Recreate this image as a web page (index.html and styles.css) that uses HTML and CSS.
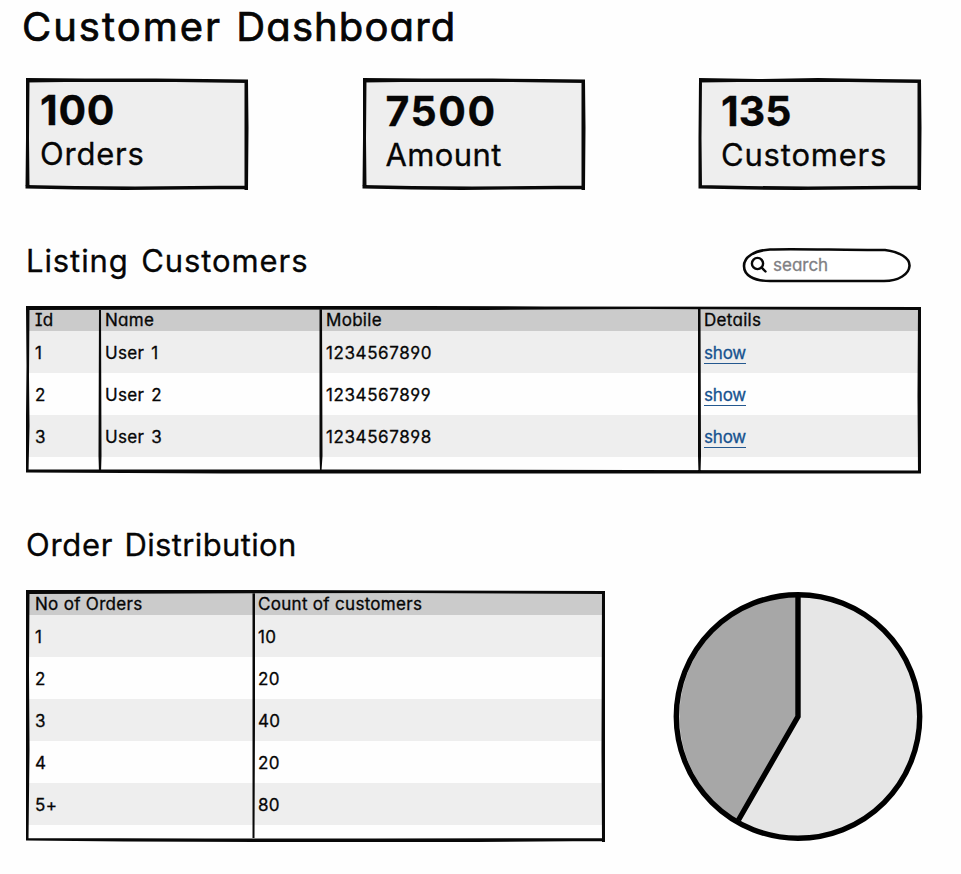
FILE: index.html
```html
<!DOCTYPE html>
<html lang="en">
<head>
<meta charset="utf-8">
<title>Customer Dashboard</title>
<link rel="stylesheet" href="styles.css">
</head>
<body>
<main class="page">
  <h1 class="title">Customer <span>Dashboard</span></h1>

  <section class="cards">
    <div class="card">
      <svg class="sketch" viewBox="0 0 224 112"><path class="fill" d="M3 3H221V109H3Z"/><path d="M1 0L60 .5 130 .5 180 1 223 1.500V5L150 4 90 4 40 4 1 4.500ZM219.500 2H223L223.500 50 223 112H219.500L219.500 60ZM1 1H4.500L4 60 4.500 110H.5L1 60ZM.5 107L50 108 110 108.500 223 107.500V111L160 111.500 100 112 50 111.500 .5 110.500Z"/></svg>
      <div class="number n100">100</div>
      <div class="label l-orders">Orders</div>
    </div>
    <div class="card card-wide">
      <svg class="sketch" viewBox="0 0 224 112"><path class="fill" d="M3 3H221V109H3Z"/><path d="M1 0L60 .5 130 .5 180 1 223 1.500V5L150 4 90 4 40 4 1 4.500ZM219.500 2H223L223.500 50 223 112H219.500L219.500 60ZM1 1H4.500L4 60 4.500 110H.5L1 60ZM.5 107L50 108 110 108.500 223 107.500V111L160 111.500 100 112 50 111.500 .5 110.500Z"/></svg>
      <div class="number n7500">7500</div>
      <div class="label l-amount">Amount</div>
    </div>
    <div class="card card-wide">
      <svg class="sketch" viewBox="0 0 224 112"><path class="fill" d="M3 3H221V109H3Z"/><path d="M1 0L60 1 120 0 180 1 223 1.500V5L150 4 90 4 40 4 1 4.500ZM219.500 2H223L223.500 50 223 112H219.500L219.500 60ZM1 1H4L3.500 60 4 110H.5L.5 60ZM.5 107L50 108 110 108.500 223 107.500V111L160 111.500 100 112 50 111.500 .5 110.500Z"/></svg>
      <div class="number n135">135</div>
      <div class="label l-customers">Customers</div>
    </div>
  </section>

  <section class="listing">
    <header class="bar">
      <h2 class="h-listing">Listing Customers</h2>
      <label class="search">
        <svg class="pill" viewBox="0 0 170 36"><path d="M28 2.500C50 1.500 95 3 143 3C158 5 168 11 167.500 19C167 27 157 34 142 34L28 34C11 34 2 28 2 19C2 10 12 3.500 28 2.500Z"/></svg>
        <svg class="glass" viewBox="0 0 18 18"><circle cx="7.500" cy="7.500" r="5.600"/><path d="M11.700 11.700L15.500 15.500"/></svg>
        <span>search</span>
      </label>
    </header>
    <div class="frame frame-customers">
      <table>
        <colgroup><col class="c-id"><col class="c-name"><col class="c-mobile"><col></colgroup>
        <thead><tr><th>Id</th><th>Name</th><th>Mobile</th><th>Details</th></tr></thead>
        <tbody>
          <tr><td>1</td><td>User 1</td><td class="phone">1234567890</td><td><a>show</a></td></tr>
          <tr><td>2</td><td>User 2</td><td class="phone">1234567899</td><td><a>show</a></td></tr>
          <tr><td>3</td><td>User 3</td><td class="phone">1234567898</td><td><a>show</a></td></tr>
        </tbody>
      </table>
      <svg class="sketch" viewBox="0 0 896 168"><path d="M1 0L400 0 520 .5 896 1V4L620 3 460 4 230 3.500 1 4ZM893 1.500H896L896.500 80 896 167.500H893L892.500 90ZM1 .5H4.500L4 70 4.500 120 3.500 166H1V110L1.500 60ZM1 163.500L300 163.500 896 164.500V167.500L500 167.500 200 167.500 100 167 1 166.500ZM74 3H76L76.500 150 76 167H74L73.500 150ZM294.500 3H297L297.500 150 296.500 165H295L294.500 150ZM673 3H675.500L676 150 675.500 167H673.500L673 150Z"/></svg>
    </div>
  </section>

  <section class="distribution">
    <div class="orders">
      <h2 class="h-order">Order <span>Distribution</span></h2>
      <div class="frame frame-orders">
        <table>
          <colgroup><col class="c-orders"><col></colgroup>
          <thead><tr><th>No of Orders</th><th>Count of customers</th></tr></thead>
          <tbody>
            <tr><td>1</td><td>10</td></tr>
            <tr><td>2</td><td>20</td></tr>
            <tr><td>3</td><td>40</td></tr>
            <tr><td>4</td><td>20</td></tr>
            <tr><td>5+</td><td>80</td></tr>
          </tbody>
        </table>
        <svg class="sketch" viewBox="0 0 580 252"><path d="M1 0L200 0 400 .5 580 1V4L380 3 160 3.500 1 4ZM577 1.500H580L580 90 580 252H577L576.500 160ZM1 0H4.500L4 80 4.500 160 3.500 250H1L1 160 1 80ZM1 248L180 248.500 350 248.500 580 248V251L450 252 350 252 250 252 100 251.500 1 250.500ZM227.500 3H230L230 130 229.500 248H227.500L227.500 130Z"/></svg>
      </div>
    </div>
    <svg class="pie" viewBox="0 0 252 252">
      <circle class="slice-light" cx="126" cy="126.500" r="121.700"/>
      <path class="slice-dark" d="M126 126.500V4.800A121.700 121.700 0 0 0 66 230.500Z"/>
      <circle class="outline" cx="126" cy="126.500" r="121.700"/>
      <path class="outline" d="M126 4.800V126.500L66.500 230"/>
    </svg>
  </section>
</main>
</body>
</html>
```

FILE: styles.css
```css
* {
  box-sizing: border-box;
}

body {
  margin: 0;
  background: #fefefe;
  color: #060606;
  font-family: Inter, "Open Sans", sans-serif;
  font-feature-settings: "cv11" 1, "cv08" 1, "cv04" 1;
  -webkit-text-stroke: 0.3px;
}

.page {
  width: 961px;
  height: 874px;
  padding: 7px 39px 0 25px;
  overflow: hidden;
}

h1,
h2 {
  margin: 0;
  font-weight: 400;
  line-height: 40px;
  white-space: nowrap;
}

.title {
  margin-left: -3px;
  font-size: 40px;
  letter-spacing: 2px;
  word-spacing: 1px;
  -webkit-text-stroke: 0.7px;
}

.title span {
  letter-spacing: 1.1px;
}

h2 {
  font-size: 31px;
  letter-spacing: 1px;
}

.h-listing {
  padding-left: 1px;
  letter-spacing: 0.9px;
  word-spacing: 3px;
}

.h-order {
  padding-left: 1px;
  letter-spacing: 0.7px;
  word-spacing: 2px;
}

.h-order span {
  letter-spacing: 0.35px;
}

.cards {
  display: flex;
  justify-content: space-between;
  margin-top: 31px;
}

.card {
  position: relative;
  width: 224px;
  height: 112px;
  padding: 12px 0 0 15px;
}

.card-wide {
  padding: 13px 0 0 23px;
}

.sketch {
  position: absolute;
  inset: 0;
  width: 100%;
  height: 100%;
  fill: #080808;
}

.card .sketch .fill {
  fill: #eee;
}

.number,
.label {
  position: relative;
}

.number {
  font-size: 41px;
  font-weight: 700;
  line-height: 40px;
}

.n100 {
  letter-spacing: 0.7px;
}

.n7500 {
  padding-left: 1px;
  letter-spacing: 1.6px;
}

.label {
  font-size: 31px;
  line-height: 47px;
}

.l-orders,
.l-customers {
  letter-spacing: 0.8px;
}

.l-amount {
  padding-left: 1px;
  letter-spacing: 0.4px;
}

.listing {
  margin-top: 51px;
}

.bar {
  display: flex;
  justify-content: space-between;
}

.search {
  position: relative;
  display: flex;
  align-items: center;
  width: 170px;
  height: 36px;
  margin: 6px 10px 0 0;
  padding-left: 8px;
  color: #808083;
  font-size: 17px;
}

.pill {
  position: absolute;
  inset: 0;
  fill: #fff;
  stroke: #080808;
  stroke-width: 2.6;
}

.glass {
  position: relative;
  width: 18px;
  height: 18px;
  margin-right: 5px;
  fill: none;
  stroke: #080808;
  stroke-width: 2.4;
  stroke-linecap: round;
}

.search span {
  position: relative;
}

.frame {
  position: relative;
  padding: 3px 2px 0;
}

.frame-customers {
  width: 896px;
  height: 168px;
  margin-top: 23px;
}

table {
  width: 100%;
  table-layout: fixed;
  border-collapse: collapse;
  font-size: 17px;
  letter-spacing: 0.3px;
}

.c-id {
  width: 73px;
}

.c-name {
  width: 221px;
}

.c-mobile {
  width: 378px;
}

.c-orders {
  width: 226px;
}

th,
td {
  padding: 0 0 0 5px;
  text-align: left;
  font-weight: 400;
  white-space: nowrap;
}

th:first-child,
td:first-child {
  padding-left: 8px;
}

th {
  height: 22px;
  background: #cbcbcb;
  line-height: 22px;
}

td {
  height: 42px;
  padding-top: 2px;
  line-height: 40px;
  word-spacing: 2px;
}

.phone {
  letter-spacing: 0.6px;
}

tbody tr:nth-child(odd) {
  background: #eee;
}

td a {
  display: inline-block;
  border-bottom: 1.5px solid #24588f;
  color: #16528f;
  letter-spacing: -0.2px;
  line-height: 20px;
}

.distribution {
  display: flex;
  justify-content: space-between;
  margin-top: 51px;
}

.frame-orders {
  width: 580px;
  height: 252px;
  margin-top: 25px;
}

.pie {
  width: 252px;
  height: 252px;
  margin: 65px -2px 0 0;
}

.slice-light {
  fill: #e6e6e6;
}

.slice-dark {
  fill: #a7a7a7;
}

.outline {
  fill: none;
  stroke: #000;
  stroke-width: 5.4;
}
```
